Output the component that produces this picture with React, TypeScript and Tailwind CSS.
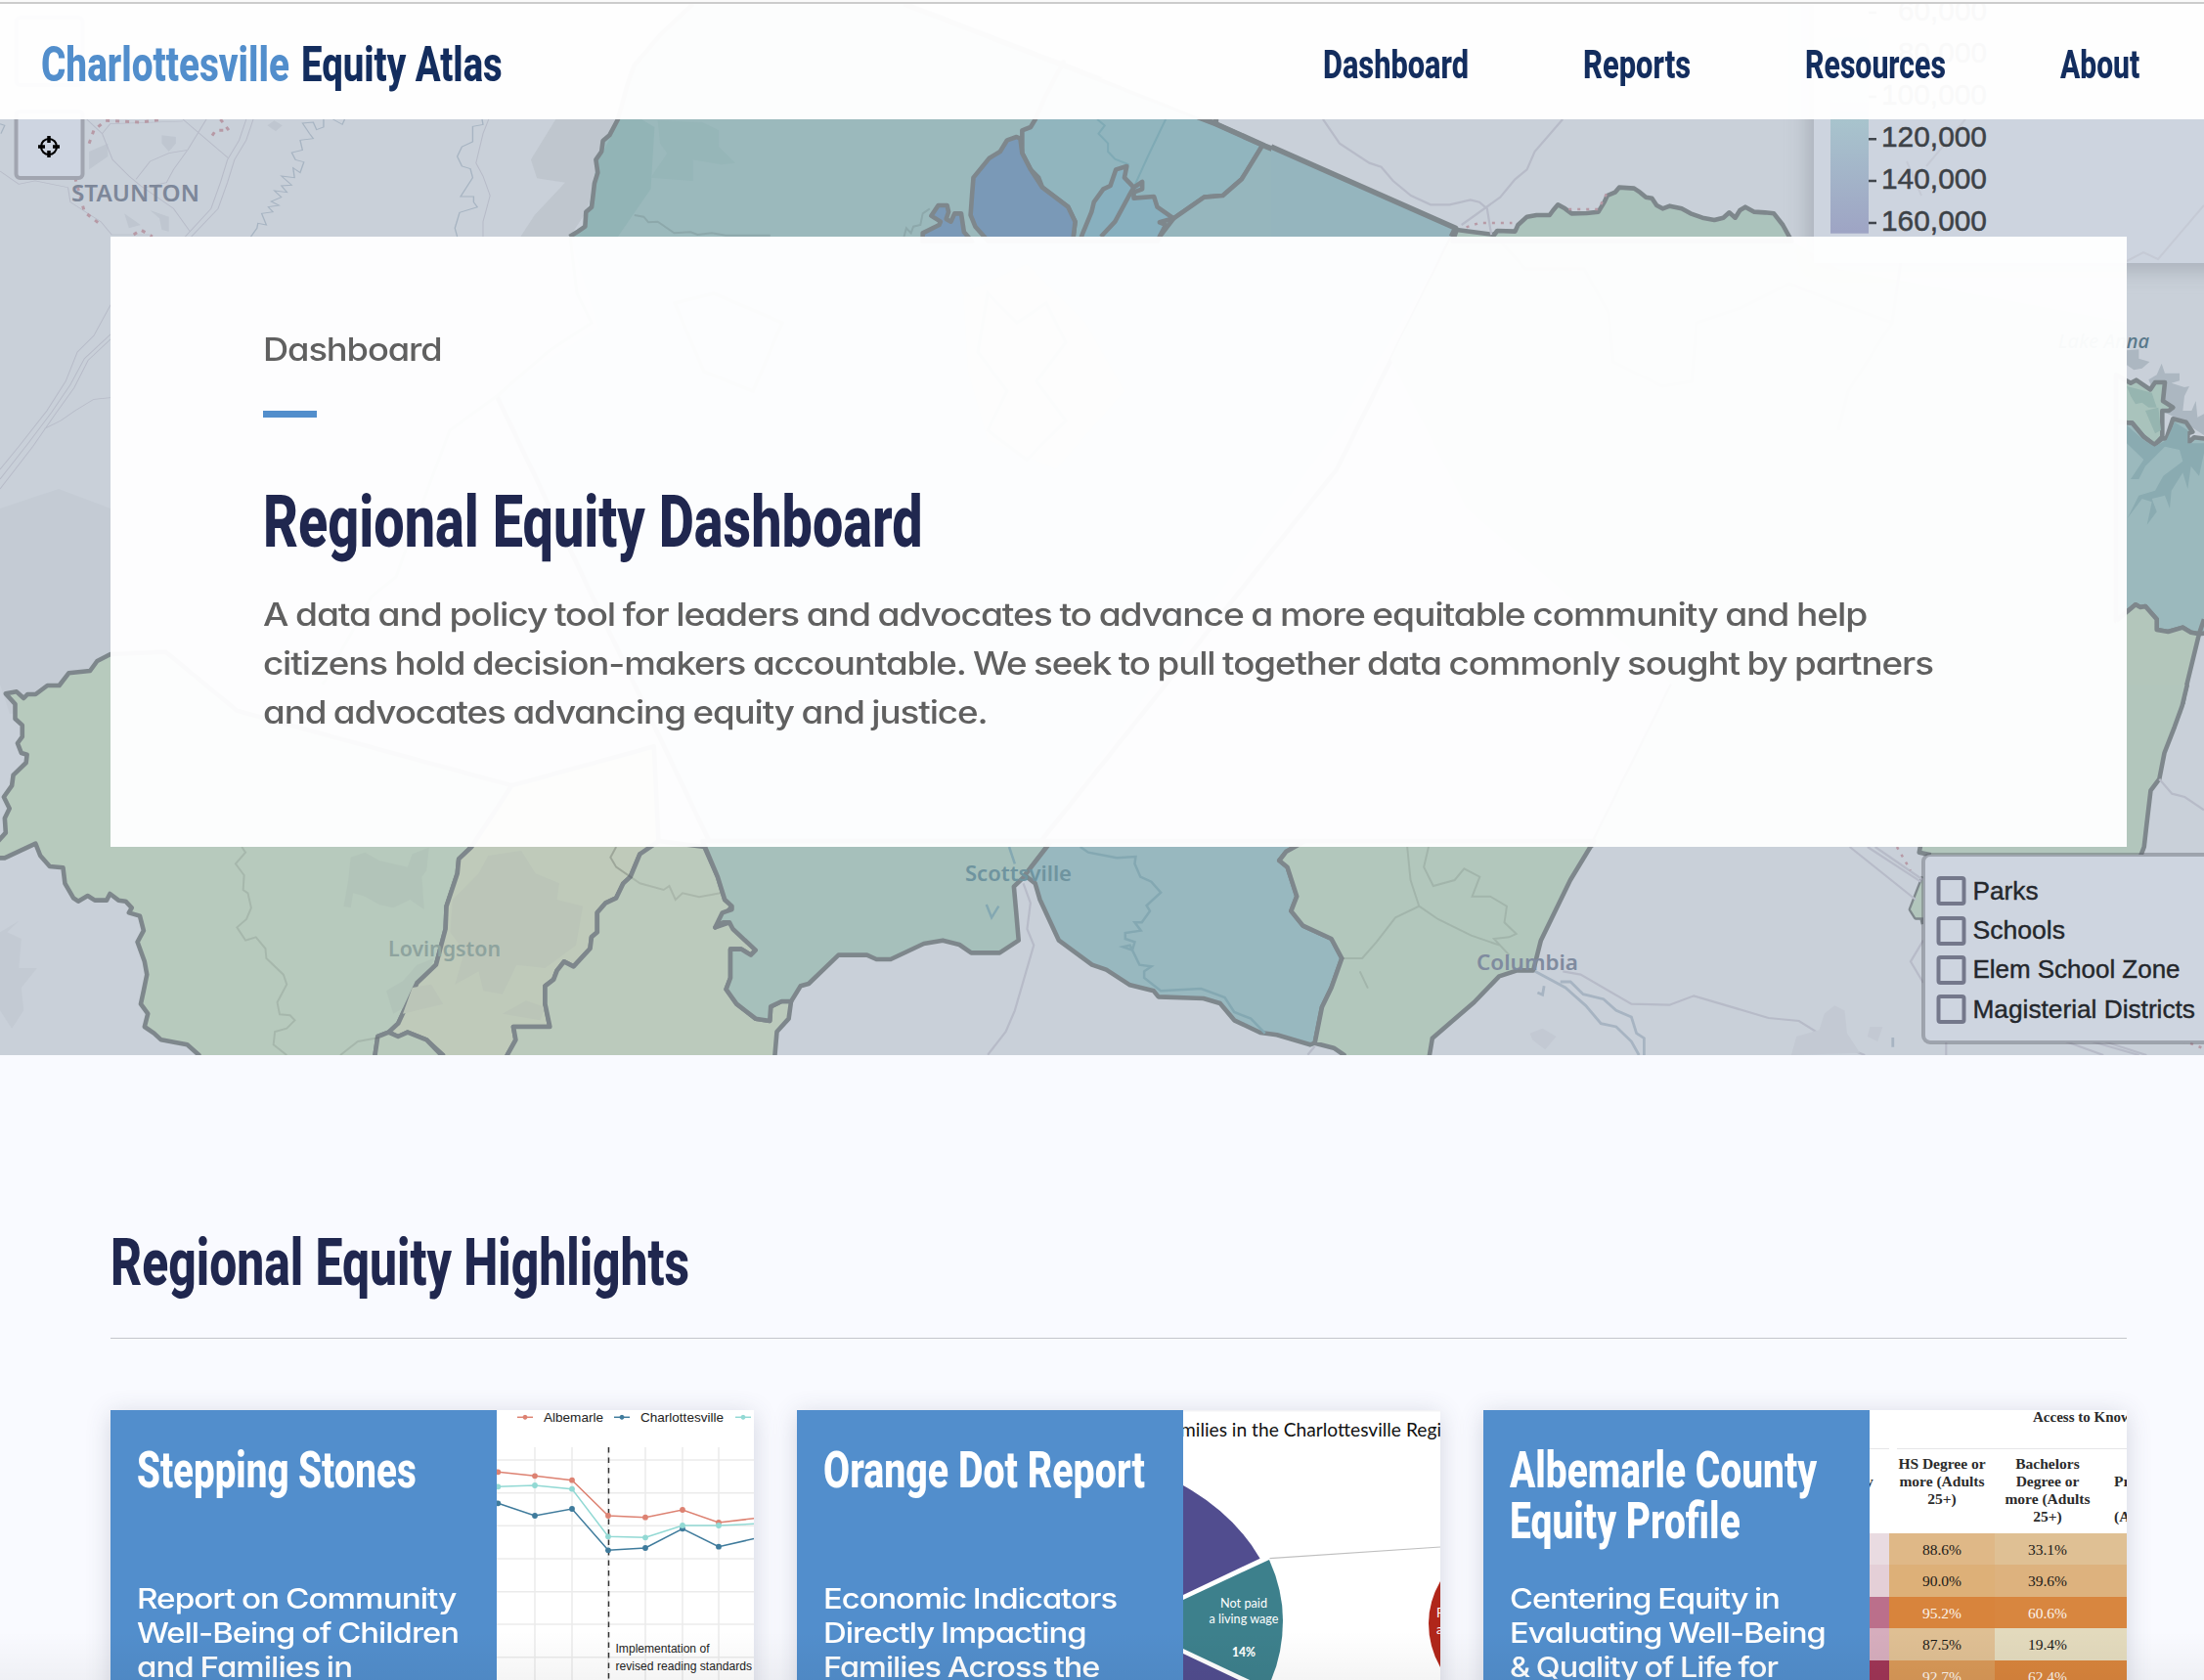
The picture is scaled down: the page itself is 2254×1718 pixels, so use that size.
import { useLayoutEffect, useRef, useState, type ReactNode } from "react";

/* A single line of type condensed or expanded to an exact measure. */
function Line({ w, className = "", children }: { w: number; className?: string; children: ReactNode }) {
  const ref = useRef<HTMLSpanElement>(null);
  const [scale, setScale] = useState(1);
  useLayoutEffect(() => {
    if (ref.current) setScale(w / ref.current.offsetWidth);
  }, [w]);
  return (
    <span className="block whitespace-nowrap" style={{ width: w }}>
      <span ref={ref} className={`inline-block origin-left align-top ${className}`} style={{ transform: `scaleX(${scale})` }}>
        {children}
      </span>
    </span>
  );
}

const nav: [string, number][] = [
  ["Dashboard", 149],
  ["Reports", 110],
  ["Resources", 144],
  ["About", 81],
];

const edge = {
  stroke: "#7e878c",
  strokeWidth: 4.6,
  strokeLinejoin: "round" as const,
  vectorEffect: "non-scaling-stroke" as const,
};
const road = { fill: "none", stroke: "#b7bbc8", strokeWidth: 2.2, vectorEffect: "non-scaling-stroke" as const };
const river = { fill: "none", stroke: "#a7b4c2", strokeWidth: 2.8, vectorEffect: "non-scaling-stroke" as const };
const creek = { fill: "none", stroke: "#000", strokeOpacity: 0.09, strokeWidth: 2, vectorEffect: "non-scaling-stroke" as const };

function MapBackdrop() {
  return (
    <svg className="absolute inset-0" width="2254" height="1079" viewBox="0 0 2254 1079" fontFamily="'Noto Sans', sans-serif">
      <defs>
        <linearGradient id="ramp" x1="0" y1="0" x2="0" y2="1">
          <stop offset="0" stopColor="#d5dccb" />
          <stop offset="0.5" stopColor="#a8c4cd" />
          <stop offset="1" stopColor="#9ea4c4" />
        </linearGradient>
        <filter id="soft" x="-10%" y="-10%" width="120%" height="130%">
          <feGaussianBlur stdDeviation="12" />
        </filter>
      </defs>
      <rect width="2254" height="1079" fill="#c9d0d9" />
      <path d="M0 520L60 500L113 520V690L70 720L10 730L0 700Z" fill="#c4cbd4" />

      {/* northern strip, west */}
      <g transform="scale(.4796 .33333)">
        <path d="M1185 366H1322L1280 450L1270 560L1250 650L1215 726H1110L1140 660L1205 560L1145 547L1132 490Z" fill="#bfc6ce" />
        <path d="M345 415L375 420L375 440L360 465L345 440ZM190 465L230 440V480L190 520ZM265 655L300 690L275 700ZM320 645L360 665V710L345 705L340 670ZM570 385L585 370L602 385L588 403Z" fill="#bfc6d0" />
        <g {...road}>
          <path d="M525 366L510 430L485 490L470 560L450 640L395 726M540 366L525 430L500 490L485 560L465 640L408 726" />
          <path d="M390 366L487 485M185 366L218 410L240 490L275 540L300 570L370 640L405 710M440 366L400 460L360 470L320 495L290 550M400 460L370 520L355 560L310 575M218 410L235 380L390 372" />
          <path d="M0 525L40 565L75 555L145 575L150 620L215 680L238 720H320" />
          <path d="M1042 366L1030 410L1015 500L1030 540L1045 600L1030 680L1030 726" />
          <path d="M236 935L200 1030L165 1080L140 1170L100 1260L40 1370L0 1440M236 1025L180 1100L150 1180L110 1265L60 1360L0 1470M236 1040L188 1105L158 1190L118 1270L70 1370L0 1500M236 1220L200 1225L160 1260L130 1290L95 1315" />
        </g>
        <g {...river}>
          <path d="M735 366L730 382L710 366M690 366V390L675 398L668 375L645 378L660 410L668 425L640 430L645 460L622 468L630 490L648 497L640 530L625 515L628 545L600 540L622 568L600 570L612 590L585 585L600 605L578 618L595 630L572 635L582 650L558 655L568 690L550 685L548 700L535 726" />
          <path d="M1028 366L1030 382L1008 388V435L985 450L975 480L985 510L1003 518L1008 545L982 603H1010V620L1018 635L980 652L970 700L975 726M0 380L10 385L2 410" />
        </g>
        <path d="M190 440L200 400L225 370L300 375L350 366M470 366L488 400L460 400L448 425M160 545L180 650L215 690M285 720L300 705L325 726" fill="none" stroke="#b79aa6" strokeWidth="3" strokeDasharray="4 6" vectorEffect="non-scaling-stroke" />
      </g>

      {/* under the intro panel */}
      <path d="M583 242L612 335L525 390L508 405L728 866H1060L1367 440L1485 242Z" fill="#a9bcd2" />
      <path d="M508 405L728 866M1485 242L1367 480L1060 866M1710 700L1627 866" {...edge} fill="none" />
      <path d="M1485 242H1825L1880 275L2175 330V866H1627L1710 700L1500 520L1422 367Z" fill="#b3c9bd" />
      <path d="M985 300L1050 270L1110 330L1150 400L1080 480L1010 450L990 380Z" fill="#bcccd0" />
      <g fill="none" stroke="#98a3ab" strokeWidth="3">
        <path d="M583 242L590 300L605 330L560 360L508 405L460 440L430 520L405 590L380 610L330 700" />
        <path d="M1010 300L1040 330L1070 310L1090 350L1060 390L1090 430L1050 470L1010 440L1030 400L1000 360ZM690 310L730 300L800 330L770 400L720 380Z" />
        <path d="M1530 242L1560 275L1620 275L1645 320L1650 370L1700 395L1730 390L1735 330L1780 315L1830 290L1880 310L1935 330L1945 260M1935 330L1890 400L1880 440" />
      </g>

      {/* northern strip, centre */}
      <g transform="translate(560 0) scale(.4796 .33333)">
        <path d="M310 12L245 100L185 200L170 260L150 366L132 415L118 432L115 465L103 490L107 530L100 562L97 600L94 635L82 650L80 695L65 710L47 726H1568V465L1425 380L760 12Z" fill="#9bb9bc" />
        <path d="M155 366H200L228 390L220 580L150 726H50L82 690L105 500Z" fill="#92b4b6" />
        <path d="M235 370L330 375L365 400V450L400 500L370 505L310 490V555L220 545L255 470L240 440Z" fill="#96b6b8" />
        <path d="M185 660L205 665L215 682L235 680L270 715L305 712L320 720L350 715L380 722L475 722M815 640L800 655L795 690L780 695L775 715L765 700L760 726" {...creek} />
        <path d="M310 12L245 100L185 200L170 260L150 366L132 415L118 432L115 465L103 490L107 530L100 562L97 600L94 635L82 650L80 695L65 710L47 726" {...edge} fill="none" />
        <path d="M1100 190L1060 300L1040 366L1030 390L1012 400V470L1030 520L1047 545L1055 575L1110 635L1125 680L1120 740H1300L1305 680L1335 670L1400 605L1440 600L1480 550L1525 445L1425 380L1100 200Z" fill="#91b5be" {...edge} />
        <path d="M1335 670L1400 605L1440 600L1480 550L1525 445L1568 468V726H1300L1315 690Z" fill="#96b6bd" />
        <path d="M1172 366L1188 385L1175 410L1195 440V465L1210 488L1240 505M1318 366L1280 480L1250 575" fill="none" stroke="#7faab5" strokeWidth="2" vectorEffect="non-scaling-stroke" />
        <path d="M1140 720L1160 650L1165 620L1185 580L1200 570L1212 520L1235 510L1230 545L1250 575L1268 558V580L1250 590V608L1293 603L1300 635L1335 670L1305 682L1318 690L1300 740H1135Z" fill="#88b0bf" {...edge} />
        <path d="M1250 575L1240 600L1210 680L1180 726M1525 445L1480 550L1440 600L1400 605L1335 670L1305 726" {...edge} fill="none" />
        <path d="M1000 420L980 430L965 465L942 485L908 545L905 600L902 660L912 695L940 740H1120L1125 680L1110 635L1055 575L1030 520L1012 470L1008 425Z" fill="#7a99b7" {...edge} />
        <path d="M800 740V715L835 690L838 680L818 662L833 630L852 630L855 650L850 672L860 680L868 655H882L888 712L905 740Z" fill="#7a99b7" {...edge} />
        <path d="M760 12L1425 380L1530 448L1568 470M1425 380V366" {...edge} fill="none" strokeWidth={5.5} />
        <path d="M1568 12L1425 366H1400L1180 240L1320 160L1350 70L1480 110L1500 190Z" fill="#cdd8d5" />
      </g>

      {/* northern strip, east */}
      <g transform="translate(1300 0) scale(.60842 .33333)">
        <path d="M0 450L310 700L303 726H0Z" fill="#95b5be" />
        <path d="M0 450L310 700L303 726" {...edge} fill="none" strokeWidth={5.5} />
        <path d="M305 740L312 705L340 712L375 720L380 708L410 710L415 690L430 665L446 660L468 660L474 645L482 628L494 640L505 655L530 654L550 650L560 620L565 600L578 590L585 575L610 578L620 590L630 605L640 608L648 630L658 640L670 632L690 640L705 655L725 668L745 675L760 668L770 652L780 668L788 645L797 635L812 650L830 652L845 655L860 690L875 740Z" fill="#abc3bc" {...edge} />
        <path d="M87 366L115 440L165 500L185 512L205 555L235 600L268 628H300L335 613L350 620L363 640L370 720M490 366L443 465L430 520L410 550L385 605L320 690" {...road} />
        <path d="M328 697L350 684H405M500 642H550L565 590" fill="none" stroke="#b79aa6" strokeWidth="2.5" strokeDasharray="3 6" vectorEffect="non-scaling-stroke" />
      </g>

      {/* eastern edge */}
      <g transform="translate(2154 320) scale(.33333)">
        <path d="M63 115L100 112V140L133 150L110 170L85 175L63 160ZM130 205L155 190L170 155L180 185L225 185V208L200 215L240 228L255 225L240 255L235 300L262 300L275 270L280 320L300 310V375L230 330L170 300Z" fill="#acb7c1" />
        <path d="M30 190L75 215L92 206L135 235L150 213H180L174 270L205 290L192 300H172V380L148 405L115 380L80 338L30 335Z" fill="#a9c3bc" {...edge} />
        <path d="M63 225L90 232L140 245L155 290L130 290L110 275L90 280L75 255ZM120 300L160 290L168 360L150 370Z" fill="#96b5b0" />
        <path d="M30 335L80 338L115 380L148 405L172 385H185L205 325L245 335L265 365L250 370V400L270 382L320 388V980L285 985L260 980L235 965L190 978L155 972V940L120 900L105 903L90 895L30 945Z" fill="#9bb9bd" {...edge} />
        <path d="M63 345L115 390L148 410L185 390L210 335L250 360V400L300 400V430L285 500L260 470L250 540L235 490L200 545L195 600L180 560L140 570L155 610L125 650L140 580L110 570L65 630L100 560L150 545L175 500L235 455L225 420L180 410L120 470L100 510H75L115 450L63 400Z" fill="#8aabb1" />
        <path d="M30 1230V945L90 895L105 903L120 900L155 940V972L190 978L235 965L260 980L285 985L240 1170L232 1230Z" fill="#b3c6bb" />
        <path d="M30 945L90 895L105 903L120 900L155 940V972L190 978L235 965L260 980L285 985L240 1170L235 1200M285 985L300 940" {...edge} fill="none" />
      </g>

      {/* south west */}
      <g transform="translate(0 600) scale(.4847 .33333)">
        <path d="M233 207L205 228L190 258L145 265L125 303H100L75 330H58L50 342L35 322L12 328L32 360V405L47 425V460L37 480L45 510L57 515L55 540L28 578L25 610L8 645L20 680L10 710L12 755L-10 790V832H10L75 788L85 825L105 858L133 862L137 910L155 955L165 965L185 948L200 962H225L232 942L250 962L265 965L278 985L272 1000L295 1010L303 1055L290 1090L305 1150L310 1190L303 1240L297 1280L312 1310L305 1350L325 1370L340 1390L370 1398L395 1405L420 1437V1450H790L797 1380L820 1367L840 1340L880 1215L920 1160L940 1050L942 980L965 880L968 835L995 798L1080 610L500 380L350 200Z" fill="#b7cabd" {...edge} />
        <path d="M740 830L770 815L800 840L860 860L870 820L905 800L900 870L890 890L895 990L865 960L830 985L800 975L770 950L745 940L740 985L725 980L735 900ZM880 1160L915 1140L890 1260L830 1310L815 1240L850 1210Z" fill="#b2c4b9" />
        <path d="M995 798L968 835L965 880L942 980L940 1050L920 1160L880 1215L840 1340L820 1367L840 1380L860 1367L900 1390L935 1437V1450H1070V1437L1088 1390L1083 1350H1160L1150 1280V1225L1168 1205L1175 1178L1190 1150L1210 1165L1245 1110L1248 1075L1260 1060V1000L1278 970L1300 955L1315 910L1330 890L1350 820L1390 798L1380 490L1080 610Z" fill="#bfcaba" {...edge} />
        <path d="M1030 825L1100 810L1130 880L1180 910L1175 960L1230 980L1215 1100L1150 1170L1090 1160L1060 1250L1020 1240L1010 1180L960 1220L980 1120L950 1060L955 960L1010 880ZM870 1230L910 1220L935 1280L850 1310ZM1060 1310L1110 1270L1150 1290L1140 1330Z" fill="#bbc5b8" />
        <path d="M790 1450L797 1380L820 1367L840 1380L860 1367L900 1390L940 1450Z" fill="#b9cabc" {...edge} />
        <path d="M510 798L518 815L497 850L515 885L513 930L523 940L530 985L520 1020L500 1045L518 1085L540 1075L560 1110L562 1140L598 1190L605 1220L585 1275L590 1312L612 1315L622 1330L605 1355L580 1365L577 1405L605 1437M718 1437L755 1395L800 1383M1300 798L1288 830L1300 860L1350 910L1400 930L1412 918L1425 960L1440 940L1475 958L1520 940" {...creek} />
        <path d="M0 1060L40 1025L15 1060L45 1080L40 1170H78L45 1230L50 1300L25 1355L0 1300Z" fill="#c3cad3" />
      </g>

      {/* south centre */}
      <g transform="translate(700 800) scale(.4847 .33333)">
        <path d="M42 198L70 290L85 360L100 380L65 445L95 430L150 515L140 530L120 512H97V600L88 635L110 680L150 725L180 732L182 688L205 672H225L220 725L195 765L190 850H-374V837L-356 790L-361 750H-284L-294 680V625L-276 605L-269 578L-254 550L-234 565L-199 510L-196 475L-184 460V400L-166 370L-144 355L-129 310L-114 290L-94 220L-54 180Z" fill="#bbcabc" {...edge} />
        <path d="M-144 198L-156 230L-144 260L-94 310L-44 330L-32 318L-19 360L-4 340L31 352L76 340" {...creek} />
        <path d="M38 180L70 290L85 360L100 380V390L80 400L65 445L82 430L95 430L102 450L150 515L140 530L120 512H97V600L88 635L110 680L150 725L180 732L182 688L205 672H225L245 625L262 618L325 530H385L405 543H435L505 495L545 485L580 498L605 523H665L705 485L700 400L695 320L718 288L774 180Z" fill="#a6c0bb" {...edge} />
        <path d="M774 180L718 285L740 310L750 360L790 485L860 560L890 575L940 622L990 640L1000 658L1095 663L1130 678L1160 730L1215 768L1250 775L1320 805L1330 800L1345 690L1365 630L1387 540L1365 480L1305 440L1280 395L1292 350L1272 260L1255 240L1270 212L1310 180Z" fill="#98b8bf" {...edge} />
        <path d="M835 198L852 215L912 232L952 228L950 250L962 290L985 305L1005 338L975 378L982 395L965 430H950L963 455L930 462V480L950 490L945 515L925 505L940 500L960 560L985 565L970 580V600L1005 640L1090 633L1140 660L1160 705L1195 725L1225 770M685 198L697 250M637 375L648 415L663 380" fill="none" stroke="#84a8b2" strokeWidth="2.5" vectorEffect="non-scaling-stroke" />
        <path d="M1310 180L1270 212L1255 240L1272 260L1292 350L1280 395L1305 440L1365 480L1387 540L1365 630L1345 690L1330 800L1370 815L1392 837V850H1572V837L1578 785L1618 735L1666 675L1719 595L1757 577H1791L1807 485L1869 300L1919 180Z" fill="#b2c7bc" {...edge} />
        <path d="M1525 198L1532 300L1550 380L1500 415L1460 490L1430 540H1390M1425 580L1442 632M1570 198L1560 260L1580 318L1625 300L1645 265L1678 290L1662 350L1700 350L1735 380L1730 430L1755 465L1740 475L1708 480L1740 530M1550 380L1590 420L1660 470L1720 500" {...creek} />
        <path d="M715 310L730 370L723 450L737 500L697 700L678 765L640 836M1330 810L1315 836" {...road} />
      </g>

      {/* south east */}
      <g transform="translate(1440 700) scale(.51913 .33333)">
        <path d="M1535 0L1525 65L1510 130L1490 210L1480 290L1463 325L1455 430L1450 498L1445 525H1015L1005 510L1010 490L960 400L1100 200L1415 0Z" fill="#b2c6bc" />
        <path d="M1535 0L1525 65L1510 130L1490 210L1480 290L1463 325L1455 430L1450 498L1443 527M1010 490L1007 515L1030 523M1015 590L1000 650L990 690L1000 715H1012L1015 735" {...edge} fill="none" />
        <path d="M1015 590L1000 650L990 690L1000 715H1015Z" fill="#b2c6bc" />
        <path d="M870 498L1000 660M905 498L1010 605M920 498L1015 600M1480 290L1505 335L1530 345L1568 385M1015 785L990 850L1015 915M305 880L340 890L440 980L515 983L563 955L710 1023L770 1032L840 1100L900 1137M1290 1092L1370 1137M1340 1092L1440 1137M1365 1092L1455 1137M1060 1092V1137" {...road} />
        <path d="M250 880L310 930L350 985L380 1040L410 1050L440 1095L455 1137M300 912H320L345 950L385 965L410 1000L440 1020L450 1070L465 1085V1137M268 925L265 952L255 945M955 1083V1112" {...river} />
        <path d="M963 498L990 570M1525 1092L1565 1115" fill="none" stroke="#b79aa6" strokeWidth="2.5" strokeDasharray="3 6" vectorEffect="non-scaling-stroke" />
        <path d="M240 1070L265 1055L292 1080L270 1120L245 1090ZM840 985L860 1000L865 1070L890 1130L755 1137L765 1080L810 1060L820 1010ZM910 1050H935L925 1095L905 1080Z" fill="#c3c9d3" />
      </g>

      <g fontSize="21" fontWeight="600">
        <text x="73" y="205.5" fontSize="22.5" textLength="131" lengthAdjust="spacingAndGlyphs" fill="#7d8799">STAUNTON</text>
        <text x="397" y="978" textLength="115" lengthAdjust="spacingAndGlyphs" fill="#8ea39e">Lovingston</text>
        <text x="987" y="901" textLength="109" lengthAdjust="spacingAndGlyphs" fill="#6f949f">Scottsville</text>
        <text x="1510" y="992" textLength="104" lengthAdjust="spacingAndGlyphs" fill="#7f8b9f">Columbia</text>
        <text x="2198" y="355.500" textAnchor="end" fontSize="20" fontWeight="500" fontStyle="italic" fill="#59788a">Lake Anna</text>
      </g>

      {/* zoom and locate buttons */}
      <g fill="#ced5e1" stroke="#a1a5b0" strokeWidth="4">
        <rect x="16.500" y="18" width="68" height="69" rx="4" />
        <rect x="16.500" y="114" width="68" height="68" rx="4" />
      </g>
      <circle cx="50" cy="150" r="8" fill="none" stroke="#000" strokeWidth="2.2" />
      <path d="M50 139V146M50 154V161M39 150H46M54 150H61" stroke="#000" strokeWidth="3.5" />

      {/* colour scale */}
      <rect x="1851" y="-20" width="440" height="294" fill="#7f8590" opacity=".5" filter="url(#soft)" />
      <rect x="1855" y="0" width="400" height="269" fill="#cdd4df" />
      <path d="M2175 267L2192 258L2207 265L2254 210M1950 165L1965 200M2010 122L1970 170" fill="none" stroke="#c5cad5" strokeWidth="2" />
      <rect x="1872" y="4" width="39" height="234.700" fill="url(#ramp)" />
      <path d="M1911 13H1919M1911 57H1919M1911 99H1919M1911 142.300H1919M1911 185H1919M1911 228H1919" stroke="#41464d" strokeWidth="2.4" />
      <g fontFamily="'Liberation Sans', sans-serif" fontSize="30" fill="#3d4247" stroke="#3d4247" strokeWidth=".5">
        <text x="1941" y="20.600" textLength="91" lengthAdjust="spacingAndGlyphs">60,000</text>
        <text x="1941" y="63.500" textLength="91" lengthAdjust="spacingAndGlyphs">80,000</text>
        <text x="1924" y="106.500" textLength="108" lengthAdjust="spacingAndGlyphs">100,000</text>
        <text x="1924" y="149.500" textLength="108" lengthAdjust="spacingAndGlyphs">120,000</text>
        <text x="1924" y="192.500" textLength="108" lengthAdjust="spacingAndGlyphs">140,000</text>
        <text x="1924" y="235.500" textLength="108" lengthAdjust="spacingAndGlyphs">160,000</text>
      </g>

      {/* layer toggles */}
      <rect x="1967" y="874" width="320" height="192" rx="7" fill="#ced5e0" />
      <rect x="1967" y="874" width="320" height="192" rx="7" fill="none" stroke="#5a5c66" strokeOpacity=".4" strokeWidth="4" />
      <g fill="none" stroke="#74788b" strokeWidth="4">
        <rect x="1982.500" y="898" width="26" height="26" rx="2" />
        <rect x="1982.500" y="939" width="26" height="26" rx="2" />
        <rect x="1982.500" y="979" width="26" height="26" rx="2" />
        <rect x="1982.500" y="1019" width="26" height="26" rx="2" />
      </g>
      <g fontFamily="'Liberation Sans', sans-serif" fontSize="26" fill="#24272c" stroke="#24272c" strokeWidth=".4">
        <text x="2017.500" y="919.500" textLength="67" lengthAdjust="spacingAndGlyphs">Parks</text>
        <text x="2017.500" y="960" textLength="94.500" lengthAdjust="spacingAndGlyphs">Schools</text>
        <text x="2017.500" y="1000" textLength="212" lengthAdjust="spacingAndGlyphs">Elem School Zone</text>
        <text x="2017.500" y="1041" textLength="227.500" lengthAdjust="spacingAndGlyphs">Magisterial Districts</text>
      </g>
    </svg>
  );
}

const xs = [1.3, 39, 77, 114, 152, 190, 227, 264];
const series = [
  { color: "#dd8272", ys: [63.3, 67.3, 71.7, 108, 109.7, 102, 115, 110.7] },
  { color: "#3f7b9c", ys: [95.3, 108, 101, 143.3, 141, 121.3, 139.7, 131.3] },
  { color: "#92d9d4", ys: [78.3, 77, 80.7, 129.3, 130.3, 118, 118, 116.3] },
];

function ReadingChart() {
  return (
    <svg width="263" height="276" viewBox="0 0 263 276" className="block bg-white" fontFamily="'Liberation Sans', sans-serif" fontSize="13.5" fill="#222">
      <g stroke="#ebebeb" strokeWidth="1.5">
        {[39, 77, 114, 152, 190, 227].map((x) => <path key={x} d={`M${x} 38V276`} />)}
        {[51, 84.7, 118.3, 152, 185.7, 219, 252.7].map((y) => <path key={y} d={`M0 ${y}H263`} />)}
      </g>
      <path d="M114.500 38V276" stroke="#333" strokeWidth="1.5" strokeDasharray="5.500 5" />
      {series.map((s) => (
        <g key={s.color} fill={s.color}>
          <polyline points={xs.map((x, i) => `${x},${s.ys[i]}`).join(" ")} fill="none" stroke={s.color} strokeWidth="1.5" />
          {xs.slice(0, 7).map((x, i) => <circle key={x} cx={x} cy={s.ys[i]} r="2.9" />)}
        </g>
      ))}
      {[29, 128, 252].map((x, i) => (
        <g key={x} stroke={series[i].color} fill={series[i].color}>
          <path d={`M${x - 8} 7.300H${x + 8}`} strokeWidth="1.5" />
          <circle cx={x} cy="7.300" r="2" />
        </g>
      ))}
      <text x="48" y="12" textLength="61" lengthAdjust="spacingAndGlyphs">Albemarle</text>
      <text x="147" y="12" textLength="85" lengthAdjust="spacingAndGlyphs">Charlottesville</text>
      <text x="121.500" y="248" fontSize="12.500" textLength="96" lengthAdjust="spacingAndGlyphs">Implementation of</text>
      <text x="121.500" y="265.500" fontSize="12.500" textLength="139.500" lengthAdjust="spacingAndGlyphs">revised reading standards</text>
    </svg>
  );
}

function WagePie() {
  return (
    <svg width="263" height="276" viewBox="0 0 263 276" className="block bg-white" fontFamily="Lato, sans-serif" textAnchor="middle" fontSize="13" fill="#fff">
      <rect width="263" height="1.500" fill="#f3f3f5" />
      <text x="-3" y="27" textAnchor="start" fontSize="19.500" textLength="267" lengthAdjust="spacingAndGlyphs" fill="#111">milies in the Charlottesville Regi</text>
      <path d="M0 77Q52 106 78.600 151.700L0 189Z" fill="#514d8f" />
      <path d="M0 249L57 276H0Z" fill="#514d8f" />
      <path d="M88 153Q102 184 102 215Q102 248 90 276H68L0 244V194Z" fill="#3d808c" />
      <path d="M88.500 151.700L263 140" stroke="#bfbfbf" strokeWidth="1.2" />
      <path d="M263 175Q251 196 251 218Q251 242 263 263Z" fill="#b0261a" />
      <text x="62" y="201.500" textLength="48" lengthAdjust="spacingAndGlyphs">Not paid</text>
      <text x="62" y="218" textLength="71" lengthAdjust="spacingAndGlyphs">a living wage</text>
      <text x="62" y="252" fontWeight="900" textLength="24" lengthAdjust="spacingAndGlyphs">14%</text>
      <text x="259" y="212" textAnchor="start">P</text>
      <text x="259" y="228.500" textAnchor="start">a</text>
    </svg>
  );
}

const rows = [
  { v: ["88.6%", "33.1%"], side: "bg-[#e9dbe1]", a: "bg-[#dfb887]", b: "bg-[#dfc094]", text: "text-[#1c1a17]" },
  { v: ["90.0%", "39.6%"], side: "bg-[#e4cfd7]", a: "bg-[#ddb078]", b: "bg-[#ddb27e]", text: "text-[#1c1a17]" },
  { v: ["95.2%", "60.6%"], side: "bg-[#bb6f8b]", a: "bg-[#d8843c]", b: "bg-[#d8863f]", text: "text-[#fbf3ea]" },
  { v: ["87.5%", "19.4%"], side: "bg-[#d6adbd]", a: "bg-[#dfbf93]", b: "bg-[#e3dabd]", text: "text-[#1c1a17]" },
  { v: ["92.7%", "62.4%"], side: "bg-[#9f3556]", a: "bg-[#d89857]", b: "bg-[#d8843c]", text: "text-[#fbf3ea]" },
];

function KnowledgeTable() {
  return (
    <div className="h-[276px] w-[263px] overflow-hidden bg-white font-['Liberation_Serif',serif] text-[15.500px] leading-[18px] text-[#2b2b2b]">
      <div className="h-[39px] pl-[167px] text-[15px] leading-[15px] font-bold whitespace-nowrap">Access to Knowledge</div>
      <div className="flex gap-2">
        <div className="h-px w-5 bg-[#e6e6e8]" />
        <div className="h-px flex-1 bg-[#e6e6e8]" />
      </div>
      <div className="grid h-[86px] w-[344px] grid-cols-[20px_108px_108px_108px] pt-[6px] text-center font-bold whitespace-nowrap">
        <div className="flex justify-start pt-[18px]"><span className="-ml-1">y</span></div>
        <div>HS Degree or<br />more (Adults<br />25+)</div>
        <div>Bachelors<br />Degree or<br />more (Adults<br />25+)</div>
        <div className="pt-[18px] pl-3.5 text-left">Professional<br /><br />(Adults</div>
      </div>
      {rows.map((r) => (
        <div key={r.v[0]} className={`mb-[0.900px] grid h-[31.500px] w-[344px] grid-cols-[20px_108px_108px_108px] text-center text-[15.500px] leading-[33px] ${r.text}`}>
          <div className={r.side} />
          <div className={r.a}>{r.v[0]}</div>
          <div className={r.b}>{r.v[1]}</div>
          <div className={r.b} />
        </div>
      ))}
    </div>
  );
}

type Row = [string, number];
const cards: { title: Row[]; body: Row[]; picture: ReactNode }[] = [
  {
    title: [["Stepping Stones", 286]],
    body: [["Report on Community", 326], ["Well-Being of Children", 329], ["and Families in", 220]],
    picture: <ReadingChart />,
  },
  {
    title: [["Orange Dot Report", 329]],
    body: [["Economic Indicators", 300], ["Directly Impacting", 269], ["Families Across the", 282]],
    picture: <WagePie />,
  },
  {
    title: [["Albemarle County", 314], ["Equity Profile", 236]],
    body: [["Centering Equity in", 276], ["Evaluating Well-Being", 323], ["& Quality of Life for", 274]],
    picture: <KnowledgeTable />,
  },
];

export default function App() {
  return (
    <div className="relative h-[1718px] w-[2254px] overflow-hidden bg-[#f9faff] font-[Inter,sans-serif] [font-feature-settings:'cv11']">
      <section className="relative h-[1079px] px-[113px] pt-[242px]">
        <MapBackdrop />
        <div className="relative h-[624px] w-[2062px] bg-white/96 pt-[91px] pl-[156px] text-[#606060]">
          <Line w={183} className="text-[32.500px] leading-[50px] font-[450] tracking-[-0.03em]">Dashboard</Line>
          <div className="mt-[37px] h-[7px] w-[55px] bg-[#528ecc]" />
          <h1 className="mt-[61px] text-[#20274f]">
            <Line w={675} className="font-['Roboto',sans-serif] text-[75px] leading-[90px] font-extrabold">Regional Equity Dashboard</Line>
          </h1>
          <div className="mt-[26px]">
            <Line w={1640} className="text-[32.500px] leading-[50px] font-[450] tracking-[-0.03em] [word-spacing:-0.03em]">A data and policy tool for leaders and advocates to advance a more equitable community and help</Line>
            <Line w={1708} className="text-[32.500px] leading-[50px] font-[450] tracking-[-0.03em] [word-spacing:-0.03em]">citizens hold decision-makers accountable. We seek to pull together data commonly sought by partners</Line>
            <Line w={741} className="text-[32.500px] leading-[50px] font-[450] tracking-[-0.03em] [word-spacing:-0.03em]">and advocates advancing equity and justice.</Line>
          </div>
        </div>
      </section>

      <header className="absolute inset-x-0 top-0 flex h-[122px] items-center justify-between border-t-2 border-[#fafafa] bg-white/97 pt-[7px] pr-[66px] pl-[42px] font-['Roboto',sans-serif] font-extrabold text-[#132d5e]">
        <div className="absolute inset-x-0 top-0 h-[2px] bg-[#cccccc]" />
        <div className="flex gap-[12px]">
          <Line w={254} className="text-[50px] leading-[60px] text-[#528ecc]">Charlottesville</Line>
          <Line w={206} className="text-[50px] leading-[60px]">Equity Atlas</Line>
        </div>
        <nav className="flex gap-[117px]">
          {nav.map(([label, w]) => (
            <Line key={label} w={w} className="text-[41.500px] leading-[50px]">{label}</Line>
          ))}
        </nav>
      </header>

      <main className="px-[113px] pt-[172px] pr-[79px]">
        <h2 className="text-[#20274f]">
          <Line w={592} className="font-['Roboto',sans-serif] text-[67.500px] leading-[80px] font-extrabold">Regional Equity Highlights</Line>
        </h2>
        <div className="mt-[37px] h-px bg-[#c4c6cb]" />
        <div className="mt-[73px] flex gap-[44px]">
          {cards.map((c) => (
            <article key={c.title[0][0]} className="flex h-[360px] w-[658px] shadow-[0_4px_24px_rgba(60,70,100,0.2)]">
              <div className="w-[395px] bg-[#528ecc] pt-[36px] pl-[27px] text-white">
                <h3 className="h-[104px]">
                  {c.title.map(([t, w]) => (
                    <Line key={t} w={w} className="font-['Roboto',sans-serif] text-[52px] leading-[52px] font-extrabold">{t}</Line>
                  ))}
                </h3>
                <div className="mt-[35px]">
                  {c.body.map(([t, w]) => (
                    <Line key={t} w={w} className="text-[29px] leading-[35px] font-[450] tracking-[-0.03em] [word-spacing:-0.03em]">{t}</Line>
                  ))}
                </div>
              </div>
              <div className="w-[263px] overflow-hidden bg-white">{c.picture}</div>
            </article>
          ))}
        </div>
      </main>
      <div className="pointer-events-none absolute inset-x-0 bottom-0 h-[50px] bg-linear-to-b from-transparent to-black/4" />
    </div>
  );
}
